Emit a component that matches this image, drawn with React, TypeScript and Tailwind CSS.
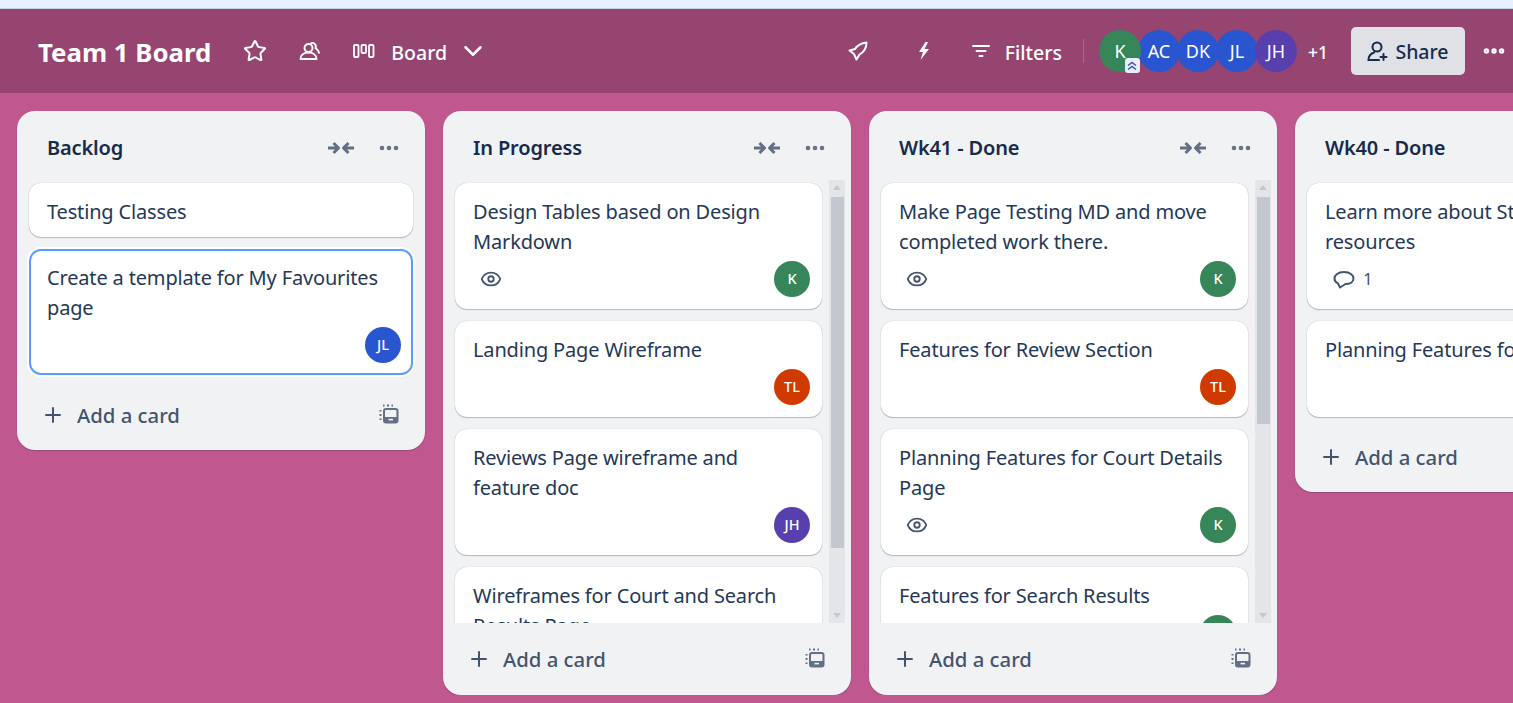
import { Star, Eye, Plus, ChevronDown, Ellipsis } from 'lucide-react'

const FONT = "font-['Noto_Sans','Open_Sans',sans-serif]"

const COLORS: Record<string, string> = {
  K: 'bg-[#36865a]',
  AC: 'bg-[#2a55d0]',
  DK: 'bg-[#2a55d0]',
  JL: 'bg-[#2a55d0]',
  JH: 'bg-[#5740ad]',
  TL: 'bg-[#d03a00]',
}

type Card = {
  title: string[]
  who?: string
  eye?: boolean
  comments?: number
  h: string
  focus?: boolean
}

type List = {
  name: string
  cards: Card[]
  thumb?: string
  clipped?: boolean
  partial?: boolean
}

const LISTS: List[] = [
  {
    name: 'Backlog',
    cards: [
      { title: ['Testing Classes'], h: 'h-[54px]' },
      { title: ['Create a template for My Favourites', 'page'], who: 'JL', h: 'h-[126px]', focus: true },
    ],
  },
  {
    name: 'In Progress',
    clipped: true,
    thumb: 'h-[351px]',
    cards: [
      { title: ['Design Tables based on Design', 'Markdown'], who: 'K', eye: true, h: 'h-[126px]' },
      { title: ['Landing Page Wireframe'], who: 'TL', h: 'h-[96px]' },
      { title: ['Reviews Page wireframe and', 'feature doc'], who: 'JH', h: 'h-[126px]' },
      { title: ['Wireframes for Court and Search', 'Results Page'], h: 'h-[126px]' },
    ],
  },
  {
    name: 'Wk41 - Done',
    clipped: true,
    thumb: 'h-[227px]',
    cards: [
      { title: ['Make Page Testing MD and move', 'completed work there.'], who: 'K', eye: true, h: 'h-[126px]' },
      { title: ['Features for Review Section'], who: 'TL', h: 'h-[96px]' },
      { title: ['Planning Features for Court Details', 'Page'], who: 'K', eye: true, h: 'h-[126px]' },
      { title: ['Features for Search Results'], who: 'K', h: 'h-[96px]' },
    ],
  },
  {
    name: 'Wk40 - Done',
    partial: true,
    cards: [
      { title: ['Learn more about Strapi and its', 'resources'], comments: 1, h: 'h-[126px]' },
      { title: ['Planning Features for Court Details'], h: 'h-[96px]' },
    ],
  },
]

function Avatar({ who, className }: { who: string; className: string }) {
  return (
    <span className={`flex shrink-0 items-center justify-center rounded-full text-white ${COLORS[who]} ${className}`}>
      {who}
    </span>
  )
}

function CollapseIcon() {
  return (
    <svg width="28" height="16" viewBox="0 0 28 16" fill="none" stroke="#626f86" strokeWidth="3" strokeLinejoin="round">
      <path d="M1 8h10M6.500 3 11.500 8l-5 5" />
      <path d="M27 8H17M21.500 3l-5 5 5 5" />
    </svg>
  )
}

function TemplateIcon() {
  return (
    <svg width="20" height="20" viewBox="0 0 20 20" fill="none" stroke="#626f86">
      {/* dashed sheet behind */}
      <path d="M1.500 6v1.500M1.500 10v2M1.500 14.500V16M4 1.500h1.500M8 1.500h2M12.500 1.500H14" strokeWidth="2" />
      <rect x="5" y="5" width="13.500" height="13.500" rx="2" strokeWidth="2" />
      <rect x="5" y="13" width="13.500" height="5" fill="#626f86" stroke="none" />
      <rect x="9.500" y="14.800" width="4.500" height="1.600" fill="#f1f2f4" stroke="none" />
    </svg>
  )
}

function TaskCard({ card }: { card: Card }) {
  const ring = card.focus
    ? 'border-2 border-[#579dff] shadow-[0_0_0_2px_#ffffff] pl-[16px] pt-[12px]'
    : 'shadow-[0_1px_1px_#091e4240,0_0_1px_#091e424f] pl-[18px] pt-[14px]'
  return (
    <div className={`relative w-full shrink-0 rounded-[12px] bg-white pr-2 ${ring} ${card.h}`}>
      {card.title.map((t) => (
        <div key={t} className="h-[30px] text-[20px] leading-[30px] tracking-[-0.16px] whitespace-nowrap text-[#253858]">
          {t}
        </div>
      ))}
      {card.eye ? <Eye size={22} strokeWidth={2} color="#44546f" className="mt-[11px] ml-[7px]" /> : null}
      {card.comments ? (
        <div className="mt-[10px] ml-[8px] flex items-center gap-[8px] text-[17px] leading-[24px] text-[#44546f]">
          <svg width="22" height="20" viewBox="0 0 22 20" fill="none" stroke="#44546f" strokeWidth="2" strokeLinejoin="round">
            <path d="M5 14.500C2.800 13.500 1.500 11.800 1.500 9.500 1.500 6 5 3 11 3s9.500 3 9.500 6.500S17 15 12.500 15L7 18.500z" />
          </svg>
          {card.comments}
        </div>
      ) : null}
      {card.who ? (
        <Avatar
          who={card.who}
          className={`absolute h-[36px] w-[36px] text-[14.500px] font-medium ${card.focus ? 'right-[10px] bottom-[10px]' : 'right-[12px] bottom-[12px]'}`}
        />
      ) : null}
    </div>
  )
}

function FakeScrollbar({ thumb }: { thumb: string }) {
  return (
    <div className="ml-[7px] flex w-[16px] shrink-0 flex-col items-center bg-[#e3e5e9] pt-[5px]">
      <div className="h-0 w-0 border-x-[4px] border-b-[5px] border-x-transparent border-b-[#c3c7cf]" />
      <div className={`mt-[7px] w-[13px] bg-[#c3c7cf] ${thumb}`} />
      <div className="mt-auto mb-[5px] h-0 w-0 border-x-[4px] border-t-[5px] border-x-transparent border-t-[#c3c7cf]" />
    </div>
  )
}

function BoardList({ list }: { list: List }) {
  return (
    <section
      className={`flex w-[408px] shrink-0 flex-col self-start rounded-[18px] bg-[#f1f2f4] shadow-[0_1px_1px_#091e4240] ${list.clipped ? 'h-[584px]' : ''}`}
    >
      <header className="flex h-[69px] shrink-0 items-center pt-[6px] pr-[24px] pl-[30px]">
        <h2 className="-mt-[1px] text-[20px] leading-[30px] font-semibold tracking-[-0.15px] text-[#172b4d]">{list.name}</h2>
        <span className="ml-auto -mt-[2px]"><CollapseIcon /></span>
        <Ellipsis size={24} strokeWidth={2.600} color="#626f86" className="-mt-[2px] ml-[22px]" />
      </header>
      {list.clipped ? (
        <div className="flex h-[443px] shrink-0 overflow-hidden pr-[6px] pl-[12px]">
          <div className="flex w-[367px] shrink-0 flex-col gap-[12px] pt-[3px]">
            {list.cards.map((c) => (
              <TaskCard key={c.title[0]} card={c} />
            ))}
          </div>
          <FakeScrollbar thumb={list.thumb ?? ''} />
        </div>
      ) : (
        <div className="flex flex-col gap-[12px] px-[12px] pt-[3px]">
          {list.cards.map((c) => (
            <TaskCard key={c.title[0]} card={c} />
          ))}
        </div>
      )}
      <footer className={`flex shrink-0 items-center pr-[26px] pl-[24px] ${list.clipped ? 'h-[72px]' : 'mt-[11px] mb-[6px] h-[58px]'}`}>
        <Plus size={24} strokeWidth={2} color="#44546f" />
        <span className="ml-[12px] text-[20.300px] font-medium text-[#44546f]">Add a card</span>
        {list.partial ? null : <span className="ml-auto -mt-[2px]"><TemplateIcon /></span>}
      </footer>
    </section>
  )
}

export default function App() {
  return (
    <div className={`flex h-[703px] w-[1513px] flex-col overflow-hidden bg-[#c0578e] ${FONT}`}>
      <div className="h-[9px] shrink-0 border-b border-[#c5d5ea] bg-[#e8f0fe]" />

      <nav className="flex h-[84px] shrink-0 items-center bg-[#954570] pr-[6px] pl-[38px] text-white">
        <h1 className="mt-[3px] text-[25.800px] font-bold">Team 1 Board</h1>
        <Star size={24} strokeWidth={2} className="ml-[32px]" />
        <svg width="22" height="22" viewBox="0 0 22 22" fill="none" stroke="currentColor" strokeWidth="1.900" strokeLinejoin="round" className="ml-[32px]">
          <circle cx="9.500" cy="8" r="4" />
          <path d="M11.500 3.500a3.500 3.500 0 0 1 5 4.500c2 1.500 3.500 3.500 3.800 5.500" />
          <path d="M1.500 19c0-4 3.500-6.500 8-6.500s8 2.500 8 6.500z" />
        </svg>
        <svg width="22" height="18" viewBox="0 0 22 18" fill="none" stroke="currentColor" strokeWidth="1.800" className="ml-[32px]">
          <rect x="1" y="3" width="4.500" height="12" rx="1" />
          <rect x="8.500" y="3" width="4.500" height="8" rx="1" />
          <rect x="16" y="3" width="4.500" height="12" rx="1" />
        </svg>
        <span className="mt-[3px] ml-[16px] text-[19.500px] font-medium">Board</span>
        <ChevronDown size={30} strokeWidth={2} className="ml-[11px]" />

        <svg width="20" height="20" viewBox="0 0 20 20" fill="none" stroke="currentColor" strokeWidth="2" strokeLinejoin="round" className="ml-auto">
          <path d="M18.500 1.500C13.500 2 9.500 4 7 8L1.500 9.500 6 13l2.500 5.500 3-5C16 11 18.500 7 18.500 1.500z" />
        </svg>
        <svg width="16" height="20" viewBox="0 0 16 20" fill="currentColor" className="ml-[48px]">
          <path d="M9.500 1 3 11h4l-2.500 8L13 8H8.500L12 1z" />
        </svg>
        <svg width="18" height="14" viewBox="0 0 18 14" fill="none" stroke="currentColor" strokeWidth="2" strokeLinecap="round" className="ml-[40px]">
          <path d="M1 2h16M4.500 7h9M7.500 12h3" />
        </svg>
        <span className="mt-[3px] ml-[15px] text-[19.500px] font-medium">Filters</span>
        <span className="mr-[15px] ml-[21px] h-[24px] w-px bg-white/20" />
        <div className="flex items-center">
          <span className="relative">
            <Avatar who="K" className="h-[42px] w-[42px] text-[18px]" />
            <span className="absolute right-[1px] bottom-[-1px] flex h-[15px] w-[15px] items-center justify-center rounded-[3px] bg-[#e9edf7]">
              <svg width="12" height="12" viewBox="0 0 12 12" fill="none" stroke="#3f51b5" strokeWidth="1.500">
                <path d="M2 5.500 6 2.500l4 3M2 9.500l4-3 4 3" />
              </svg>
            </span>
          </span>
          <Avatar who="AC" className="ml-[-3px] h-[42px] w-[42px] text-[18px]" />
          <Avatar who="DK" className="ml-[-3px] h-[42px] w-[42px] text-[18px]" />
          <Avatar who="JL" className="ml-[-3px] h-[42px] w-[42px] text-[18px]" />
          <Avatar who="JH" className="ml-[-3px] h-[42px] w-[42px] text-[18px]" />
        </div>
        <span className="mt-[3px] ml-[11px] text-[17.500px] font-medium">+1</span>
        <button className="ml-[23px] flex h-[48px] w-[114px] items-center justify-center gap-[7px] rounded-[5px] bg-[#dfe1e6] text-[19.500px] font-medium text-[#172b4d]">
          <svg width="21" height="21" viewBox="0 0 21 21" fill="none" stroke="currentColor" strokeWidth="2" strokeLinecap="round">
            <circle cx="10" cy="6" r="4.500" />
            <path d="M7 11.500c-3 1-5.500 3-5.500 7.500H12" />
            <path d="M16.500 13v6M13.500 16h6" />
          </svg>
          <span className="mt-[2px]">Share</span>
        </button>
        <Ellipsis size={26} strokeWidth={3} className="ml-[16px]" />
      </nav>

      <main className="flex gap-[18px] overflow-hidden pt-[18px] pl-[17px]">
        {LISTS.map((l) => (
          <BoardList key={l.name} list={l} />
        ))}
      </main>
    </div>
  )
}
